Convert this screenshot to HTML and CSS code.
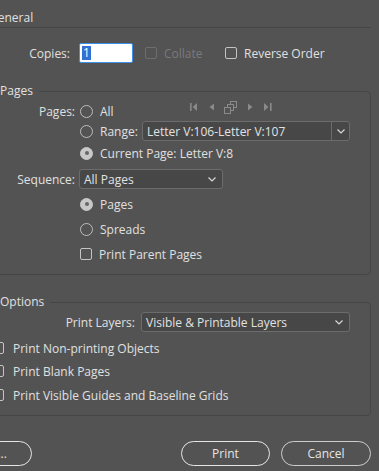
FILE: index.html
```html
<!DOCTYPE html>
<html lang="en">
<head>
    <meta charset="UTF-8">
    <title>Print</title>
    <link rel="stylesheet" href="styles.css">
</head>
<body>

<div class="dialog">
    <div class="general-title"><span>General</span></div>

    <div class="copies-row">
        <span class="copies-label">Copies:</span>
        <div class="text-input"><span class="selected">1</span></div>
        <span class="checkbox disabled collate-box"></span>
        <span class="collate-text">Collate</span>
        <span class="checkbox"></span>
        <span class="check-text">Reverse Order</span>
    </div>

    <div class="group pages-group">
        <div class="group-title">Pages</div>

        <div class="row row-all">
            <span class="row-label">Pages:</span>
            <span class="radio"></span>
            <span class="opt-text all-text">All</span>
            <svg class="page-nav" width="84" height="14" viewBox="0 0 84 14">
                <g fill="#8a8a8a">
                    <rect x="0" y="3" width="1.6" height="8"/>
                    <polygon points="7,3 2.6,7 7,11"/>
                    <polygon points="24,3.5 19.5,7 24,10.5"/>
                    <polygon points="58,3.5 62.5,7 58,10.5"/>
                    <polygon points="74,3 78.4,7 74,11"/>
                    <rect x="80" y="3" width="1.6" height="8"/>
                </g>
                <g fill="#535353" stroke="#8a8a8a" stroke-width="1">
                    <rect x="40.5" y="1.5" width="6" height="6"/>
                    <rect x="37.5" y="4.5" width="6" height="6"/>
                    <rect x="34.5" y="7.5" width="6" height="6"/>
                </g>
            </svg>
        </div>

        <div class="row row-range">
            <span class="row-label"></span>
            <span class="radio"></span>
            <span class="opt-text range-text">Range:</span>
            <div class="combo range-combo">
                <span class="combo-text">Letter V:106-Letter V:107</span>
                <span class="combo-btn">
                    <svg width="8" height="5" viewBox="0 0 8 5"><polyline points="0.5,0.5 4,4 7.5,0.5" fill="none" stroke="#d8d8d8" stroke-width="1.2"/></svg>
                </span>
            </div>
        </div>

        <div class="row row-current">
            <span class="row-label"></span>
            <span class="radio checked"></span>
            <span class="opt-text">Current Page: Letter V:8</span>
        </div>

        <div class="row row-sequence">
            <span class="row-label">Sequence:</span>
            <div class="combo sequence-combo">
                <span class="combo-text">All Pages</span>
                <svg class="chevron" width="8" height="5" viewBox="0 0 8 5"><polyline points="0.5,0.5 4,4 7.5,0.5" fill="none" stroke="#d8d8d8" stroke-width="1.2"/></svg>
            </div>
        </div>

        <div class="row row-step">
            <span class="row-label"></span>
            <span class="radio checked"></span>
            <span class="opt-text">Pages</span>
        </div>

        <div class="row row-step">
            <span class="row-label"></span>
            <span class="radio"></span>
            <span class="opt-text">Spreads</span>
        </div>

        <div class="row row-step">
            <span class="row-label"></span>
            <span class="checkbox"></span>
            <span class="check-text">Print Parent Pages</span>
        </div>
    </div>

    <div class="group options-group">
        <div class="group-title">Options</div>

        <div class="row row-layers">
            <span class="layers-label">Print Layers:</span>
            <div class="combo layers-combo">
                <span class="combo-text">Visible &amp; Printable Layers</span>
                <svg class="chevron" width="8" height="5" viewBox="0 0 8 5"><polyline points="0.5,0.5 4,4 7.5,0.5" fill="none" stroke="#d8d8d8" stroke-width="1.2"/></svg>
            </div>
        </div>

        <div class="row option-row first-option">
            <span class="checkbox"></span>
            <span class="check-text">Print Non-printing Objects</span>
        </div>
        <div class="row option-row second-option">
            <span class="checkbox"></span>
            <span class="check-text">Print Blank Pages</span>
        </div>
        <div class="row option-row third-option">
            <span class="checkbox"></span>
            <span class="check-text">Print Visible Guides and Baseline Grids</span>
        </div>
    </div>

    <div class="buttons">
        <div class="btn setup-btn">Setup...</div>
        <div class="btn print-btn">Print</div>
        <div class="btn cancel-btn">Cancel</div>
    </div>
</div>

</body>
</html>
```

FILE: styles.css
```css
body {
    margin: 0;
    width: 379px;
    height: 471px;
    overflow: hidden;
    background: #535353;
    font-family: "Open Sans", "Noto Sans", sans-serif;
    font-size: 12px;
    color: #e0e0e0;
}

.dialog {
    margin-left: -60px;
    width: 431px;
}

/* General header */
.general-title {
    height: 18px;
    line-height: 18px;
    padding-top: 9px;
    border-bottom: 1px solid #464646;
    white-space: nowrap;
}

.general-title span {
    margin-left: 49px;
}

/* Copies row */
.copies-row {
    display: flex;
    align-items: center;
    height: 20px;
    margin-top: 15px;
}

.copies-label {
    width: 130px;
    margin-right: 9px;
    text-align: right;
}

.text-input {
    width: 54px;
    height: 20px;
    box-sizing: border-box;
    background: #fff;
    border: 1.5px solid #3d8fe8;
    border-radius: 2px;
    display: flex;
    align-items: center;
    padding-left: 2px;
}

.selected {
    background: #3470d4;
    color: #fff;
    line-height: 14px;
    padding: 0 1px;
}

.checkbox {
    width: 12px;
    height: 12px;
    box-sizing: border-box;
    border: 1px solid #c4c4c4;
    border-radius: 2px;
    flex-shrink: 0;
}

.checkbox.disabled {
    border-color: #6e6e6e;
}

.collate-box {
    margin-left: 12px;
}

.collate-text {
    width: 63px;
    margin-left: 5px;
    box-sizing: border-box;
    padding-left: 2px;
    color: #7a7a7a;
}

.check-text {
    margin-left: 7px;
    white-space: nowrap;
}

/* Group boxes */
.group {
    border: 1px solid #464646;
    border-radius: 4px;
    padding-bottom: 10px;
}

.group-title {
    width: fit-content;
    height: 18px;
    line-height: 18px;
    margin-top: -10px;
    margin-left: 59px;
    padding-right: 6px;
    background: #535353;
}

.pages-group {
    margin-top: 28px;
}

.options-group {
    margin-top: 27px;
}

.row {
    display: flex;
    align-items: center;
    height: 20px;
    white-space: nowrap;
}

.row-label {
    width: 134px;
    margin-right: 5px;
    text-align: right;
    flex-shrink: 0;
}

.radio {
    width: 13px;
    height: 13px;
    box-sizing: border-box;
    border: 1.5px solid #bcbcbc;
    border-radius: 50%;
    flex-shrink: 0;
    display: flex;
    align-items: center;
    justify-content: center;
}

.radio.checked {
    background: #c8c8c8;
    border-color: #c8c8c8;
}

.radio.checked::after {
    content: "";
    width: 4px;
    height: 4px;
    border-radius: 50%;
    background: #666;
}

.opt-text {
    margin-left: 7px;
}

.all-text {
    width: 90px;
}

.range-text {
    width: 42px;
}

.page-nav {
    align-self: flex-start;
    margin-top: -1px;
}

.row-all {
    margin-top: 1px;
}

.row-current {
    margin-top: 2px;
}

.row-sequence {
    margin-top: 6px;
}

.row-step {
    margin-top: 5px;
}

/* Dropdowns */
.combo {
    height: 20px;
    box-sizing: border-box;
    border: 1px solid #6c6c6c;
    border-radius: 3px;
    background: #474747;
    display: flex;
    align-items: center;
    color: #e2e2e2;
}

.combo-text {
    flex: 1;
    padding-left: 4px;
}

.combo-btn {
    width: 17px;
    height: 100%;
    border-left: 1px solid #6c6c6c;
    display: flex;
    align-items: center;
    justify-content: center;
}

.chevron {
    margin-right: 6px;
}

.range-combo {
    width: 208px;
}

.sequence-combo {
    width: 144px;
    margin-left: -1px;
}

.layers-label {
    width: 194px;
    margin-right: 6px;
    text-align: right;
}

.layers-combo {
    width: 209px;
}

.row-layers {
    margin-top: 1px;
}

.option-row {
    padding-left: 51px;
}

.option-row .check-text {
    margin-left: 9px;
}

.first-option {
    margin-top: 6px;
}

.second-option {
    margin-top: 3px;
}

.third-option {
    margin-top: 4px;
}

/* Buttons */
.buttons {
    display: flex;
    margin-top: 25px;
}

.btn {
    height: 25px;
    box-sizing: border-box;
    border: 1.5px solid #e6e6e6;
    border-radius: 13px;
    display: flex;
    align-items: center;
    justify-content: center;
    color: #e6e6e6;
}

.setup-btn {
    width: 92px;
}

.print-btn {
    width: 89px;
    margin-left: auto;
}

.cancel-btn {
    width: 90px;
    margin-left: 11px;
    border: 1px solid #cdcdcd;
}
```
